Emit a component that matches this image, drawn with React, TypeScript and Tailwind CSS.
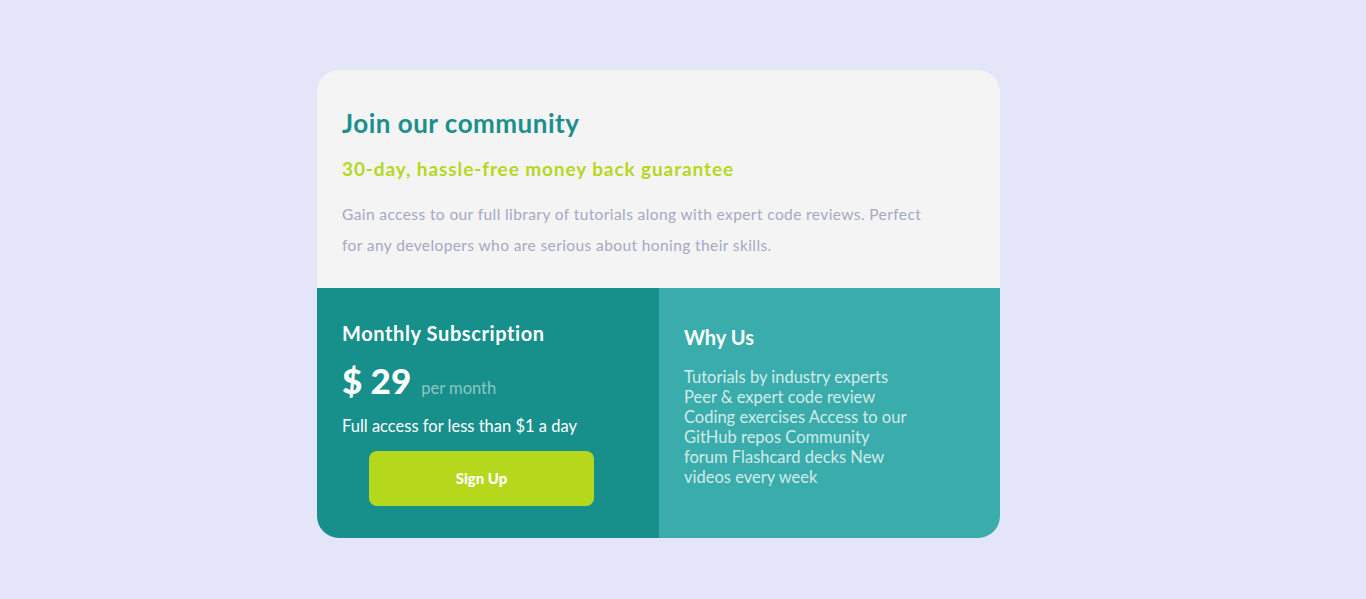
export default function App() {
  return (
    <div className="min-h-screen w-full bg-[#e5e5f9] pt-[70px] pl-[317px] font-['Lato',sans-serif]">
      <div className="w-[683px] rounded-[22px] overflow-hidden flex flex-col">
        {/* Top */}
        <div className="bg-[#f4f4f5] h-[218px] px-[25px] pt-[38px]">
          <h1 className="text-[26px] font-bold text-[#1a8f8c] leading-[30px] tracking-[0.5px]">
            Join our community
          </h1>
          <h2 className="mt-[20px] text-[19px] font-bold text-[#b5d81d] leading-[22px] tracking-[0.9px]">
            30-day, hassle-free money back guarantee
          </h2>
          <p className="mt-[19px] w-[595px] text-[15.5px] leading-[31px] tracking-[0.4px] text-[#a4a9c0]">
            Gain access to our full library of tutorials along with expert code reviews. Perfect for any developers who are serious about honing their skills.
          </p>
        </div>

        {/* Bottom */}
        <div className="flex h-[250px]">
          <div className="w-[342px] bg-[#178f8b] px-[25px] pt-[32px]">
            <h3 className="text-[20px] font-bold text-white leading-[26px] tracking-[0.6px]">Monthly Subscription</h3>
            <div className="mt-[13px] flex items-baseline gap-[10px]">
              <span className="text-[35px] font-black text-white leading-[42px]">$ 29</span>
              <span className="text-[16.5px] text-[#8ec5c4]">per month</span>
            </div>
            <p className="mt-[14px] text-[16.5px] text-white leading-[22px]">Full access for less than $1 a day</p>
            <button className="mt-[14px] ml-[27px] w-[225px] h-[55px] rounded-[8px] bg-[#b5d81d] text-white text-[15px] font-black">
              Sign Up
            </button>
          </div>
          <div className="flex-1 bg-[#39acab] px-[25px] pt-[36px]">
            <h3 className="text-[20px] font-bold text-white leading-[26px]">Why Us</h3>
            <p className="mt-[17px] w-[232px] text-[16.5px] leading-[20px] text-[#d2ebea]">
              Tutorials by industry experts Peer &amp; expert code review Coding exercises Access to our GitHub repos Community forum Flashcard decks New videos every week
            </p>
          </div>
        </div>
      </div>
    </div>
  );
}
